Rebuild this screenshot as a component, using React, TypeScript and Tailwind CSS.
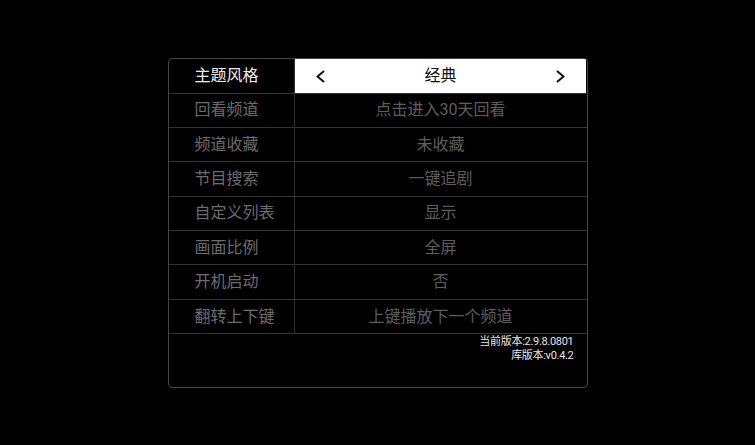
const rows = [
  { label: "回看频道", value: "点击进入30天回看" },
  { label: "频道收藏", value: "未收藏" },
  { label: "节目搜索", value: "一键追剧" },
  { label: "自定义列表", value: "显示" },
  { label: "画面比例", value: "全屏" },
  { label: "开机启动", value: "否" },
  { label: "翻转上下键", value: "上键播放下一个频道" },
];

const font = { fontFamily: 'Roboto, "Noto Sans CJK SC", sans-serif' };

const Arrow = ({ dir }: { dir: "left" | "right" }) => (
  <svg width="9" height="13" viewBox="0 0 9 13" className="mt-[1px]">
    <polyline
      points={dir === "left" ? "8,1 1.5,6.5 8,12" : "1,1 7.5,6.5 1,12"}
      fill="none"
      stroke="#111"
      strokeWidth="2"
    />
  </svg>
);

const App = () => {
  return (
    <div className="w-[755px] h-[445px] bg-black flex items-center justify-center" style={font}>
      <div className="w-[420px] h-[330px] border border-[#464646] rounded-[4px] flex flex-col overflow-hidden">
        {/* Active row */}
        <div className="flex h-[35px] border-b border-[#333]">
          <div className="w-[126px] border-r border-[#333] flex items-center pl-[26px] text-[16px] text-[#eeeeee]">
            主题风格
          </div>
          <div className="flex-1 bg-white mr-[1px] flex items-center justify-between pl-[21px] pr-[20px] text-[16px] text-[#111]">
            <Arrow dir="left" />
            <span>经典</span>
            <Arrow dir="right" />
          </div>
        </div>

        {rows.map((r, i) => (
          <div key={i} className="flex h-[34.4px] border-b border-[#333]">
            <div className="w-[126px] border-r border-[#333] flex items-center pl-[26px] text-[16px] text-[#6c6c6c]">
              {r.label}
            </div>
            <div className="flex-1 flex items-center justify-center text-[16px] text-[#5e5e5e]">
              {r.value}
            </div>
          </div>
        ))}

        {/* Version info */}
        <div className="flex-1 flex flex-col items-end pr-[13px] pt-[1px] text-[11px] leading-[14px] tracking-[-0.3px] text-[#e6e6e6]">
          <span>当前版本:2.9.8.0801</span>
          <span>库版本:v0.4.2</span>
        </div>
      </div>
    </div>
  );
};

export default App;
